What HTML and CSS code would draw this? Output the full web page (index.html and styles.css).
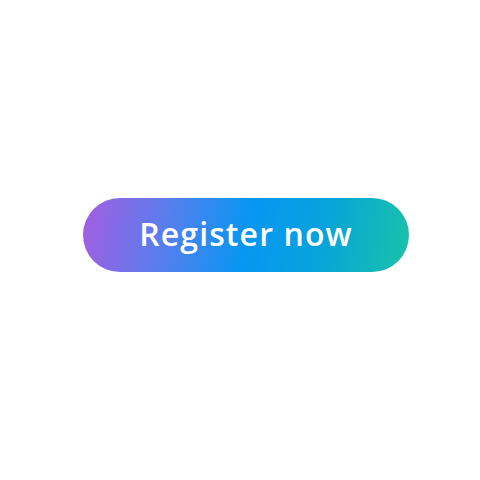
FILE: index.html
```html
<!DOCTYPE html>
<html>
<head>
<meta charset="utf-8">
<link rel="stylesheet" href="styles.css">
</head>
<body>
<main class="stage">
  <button class="cta">Register now</button>
</main>
</body>
</html>
```
FILE: styles.css
```css
html, body {
  margin: 0;
  padding: 0;
  background: #ffffff;
}
.stage {
  width: 480px;
  height: 480px;
  box-sizing: border-box;
  padding: 198px 0 0 83px;
  display: flex;
  align-items: flex-start;
}
.cta {
  width: 326px;
  height: 74px;
  border: none;
  border-radius: 37px;
  background: linear-gradient(100deg, #a35de0 0%, #5b7ded 25%, #0896f3 50%, #06a3dc 72%, #19c3a8 100%);
  color: #ffffff;
  font-family: "Open Sans", "Lato", sans-serif;
  font-weight: 600;
  font-size: 32px;
  letter-spacing: 1.1px;
  padding: 0 0 4px 0;
  display: flex;
  align-items: center;
  justify-content: center;
  cursor: pointer;
}
```
